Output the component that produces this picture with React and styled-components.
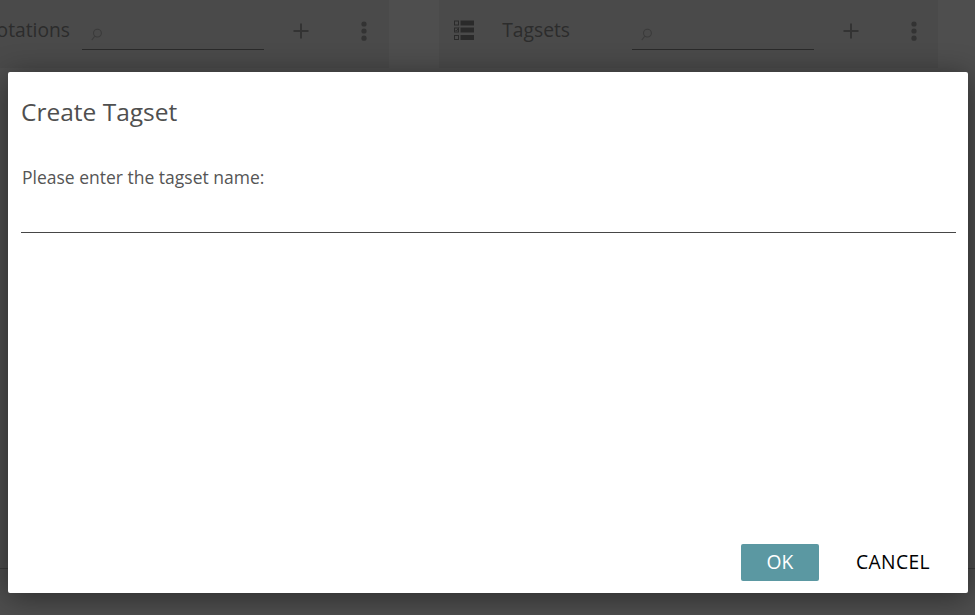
import React from "react";
import styled, { createGlobalStyle } from "styled-components";

const Global = createGlobalStyle`
  html, body { margin: 0; padding: 0; height: 100%; overflow: hidden; background: #4e4e4e; }
  #root { height: 100%; }
  * { box-sizing: border-box; }
`;

const Page = styled.div`
  position: relative;
  width: 975px;
  height: 615px;
  overflow: hidden;
  display: flex;
  flex-direction: column;
  font-family: "Open Sans", "Liberation Sans", sans-serif;
  background: #4e4e4e;
`;

const TopRow = styled.div`
  display: flex;
  gap: 50px;
  flex: 1;
`;

const Panel = styled.section`
  width: ${(p) => p.$width}px;
  height: 68px;
  background: #4a4a4a;
  display: flex;
  justify-content: flex-end;
  align-items: flex-start;
  overflow: hidden;
  flex: none;
`;

const ListIcon = styled.svg`
  width: 21px;
  height: 20px;
  margin-top: 20px;
  margin-right: 28px;
  flex: none;
  color: #2a2a2a;
`;

const Title = styled.h2`
  margin: 17px ${(p) => p.$gap}px 0 0;
  font-size: 19.25px;
  line-height: 26px;
  font-weight: 400;
  color: #2c2c2c;
  white-space: nowrap;
  flex: none;
`;

const Search = styled.div`
  width: 182px;
  height: 50px;
  margin-right: 20px;
  border-bottom: 1px solid #2a2a2a;
  display: flex;
  align-items: flex-end;
  padding: 0 0 8px 9px;
  flex: none;
  color: #3a3a3a;
`;

const IconButton = styled.div`
  width: ${(p) => p.$w}px;
  height: 61px;
  margin-right: ${(p) => p.$after || 0}px;
  display: flex;
  align-items: center;
  justify-content: center;
  flex: none;
  color: #333;
`;

const FooterLine = styled.div`
  height: 47px;
  border-top: 1px solid #3c3c3c;
  flex: none;
`;

const Dialog = styled.div`
  position: absolute;
  left: 8px;
  top: 72px;
  width: 960px;
  height: 521px;
  background: #fff;
  border-radius: 2px;
  box-shadow: 0 4px 30px rgba(0, 0, 0, 0.45);
  display: flex;
  flex-direction: column;
  padding: 23px 12px 12px 13px;
`;

const DialogTitle = styled.h1`
  margin: 0;
  font-size: 24.5px;
  line-height: 33px;
  font-weight: 400;
  color: #4f4f4f;
`;

const Label = styled.label`
  margin: 37px 0 0 1px;
  font-size: 17.5px;
  line-height: 24px;
  color: #555;
`;

const Input = styled.input`
  display: block;
  width: 100%;
  height: 44px;
  border: 0;
  border-bottom: 1px solid #464646;
  outline: none;
  background: transparent;
  font: inherit;
`;

const Actions = styled.div`
  margin-top: auto;
  display: flex;
  justify-content: flex-end;
  align-items: center;
  gap: 12px;
`;

const Ok = styled.button`
  width: 78px;
  height: 37px;
  padding: 0 0 2px;
  border: 0;
  border-radius: 2px;
  background: #5b98a2;
  color: #fff;
  font: 400 19.25px "Open Sans", sans-serif;
`;

const Cancel = styled.button`
  width: 124px;
  height: 37px;
  padding: 0 0 2px;
  margin-right: 1px;
  border: 0;
  background: transparent;
  color: #000;
  letter-spacing: 0.4px;
  font: 400 19.25px "Open Sans", sans-serif;
`;

const Magnifier = () => (
  <svg width="11" height="13" viewBox="0 0 14 16" fill="none" stroke="currentColor" strokeWidth="1.3">
    <circle cx="8.2" cy="6.2" r="5" />
    <path d="M4.8 10.2 L1 15" />
  </svg>
);

const Plus = () => (
  <svg width="16" height="16" viewBox="0 0 16 16" stroke="currentColor" strokeWidth="2">
    <path d="M8 0.5V15.5M0.5 8H15.5" />
  </svg>
);

const Dots = () => (
  <svg width="6" height="20" viewBox="0 0 6 20" fill="currentColor">
    <circle cx="3" cy="3" r="2.6" />
    <circle cx="3" cy="10" r="2.6" />
    <circle cx="3" cy="17.2" r="2.6" />
  </svg>
);

const TagsIcon = () => (
  <ListIcon viewBox="0 0 21 20">
    <g fill="none" stroke="currentColor" strokeWidth="1">
      <rect x="1.5" y="1" width="4" height="4" />
      <rect x="1.5" y="8" width="4" height="4" />
      <rect x="1.5" y="15.5" width="4" height="4" />
      <path d="M2.5 10l1 1 2.5-3.5" />
    </g>
    <g fill="currentColor">
      <rect x="7.5" y="0.5" width="13.5" height="5" />
      <rect x="7.5" y="7.5" width="13.5" height="5" />
      <rect x="7.5" y="15" width="13.5" height="5" />
    </g>
  </ListIcon>
);

export default function App() {
  return (
    <Page>
      <Global />
      <TopRow>
        <Panel $width={389}>
          <Title $gap={12}>Annotations</Title>
          <Search><Magnifier /></Search>
          <IconButton $w={34} $after={21}><Plus /></IconButton>
          <IconButton $w={50}><Dots /></IconButton>
        </Panel>
        <Panel $width={499}>
          <TagsIcon />
          <Title $gap={62}>Tagsets</Title>
          <Search><Magnifier /></Search>
          <IconButton $w={34} $after={21}><Plus /></IconButton>
          <IconButton $w={49}><Dots /></IconButton>
        </Panel>
      </TopRow>
      <FooterLine />
      <Dialog>
        <DialogTitle>Create Tagset</DialogTitle>
        <Label htmlFor="tagset-name">Please enter the tagset name:</Label>
        <Input id="tagset-name" />
        <Actions>
          <Ok>OK</Ok>
          <Cancel>CANCEL</Cancel>
        </Actions>
      </Dialog>
    </Page>
  );
}
